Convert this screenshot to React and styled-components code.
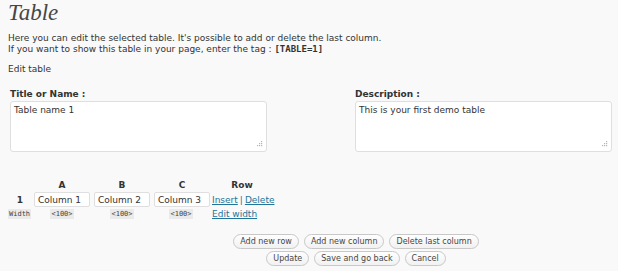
import React from 'react'
import styled, { createGlobalStyle } from 'styled-components'

const Global = createGlobalStyle`
  html, body {
    margin: 0;
    background: #f9f9f9;
    font-family: "DejaVu Sans", Verdana, sans-serif;
    font-size: 9px;
    color: #333;
  }
`

const Page = styled.div`
  width: 618px;
  height: 271px;
  padding: 0 6px 0 8px;
  box-sizing: border-box;
  overflow: hidden;
`

const Title = styled.h2`
  font-family: "Liberation Serif", "DejaVu Serif", serif;
  font-style: italic;
  font-weight: normal;
  font-size: 23px;
  color: #464646;
  margin: 0;
  padding-top: 1px;
  line-height: 24px;
`

const Intro = styled.p`
  margin: 8px 0 0;
  line-height: 11px;
`

const Tag = styled.code`
  font-family: "DejaVu Sans Mono", monospace;
  font-weight: bold;
  font-size: 9px;
`

const Sub = styled.p`
  margin: 9px 0 0;
  line-height: 11px;
`

const Fields = styled.div`
  display: flex;
  justify-content: space-between;
  padding: 0 0 0 2px;
  margin-top: 14px;
`

const Field = styled.div`
  display: flex;
  flex-direction: column;
  width: 257px;
`

const Label = styled.label`
  font-weight: bold;
  line-height: 11px;
  margin-bottom: 1px;
`

const AreaBox = styled.div`
  position: relative;
  height: 51px;
`

const Area = styled.textarea`
  width: 100%;
  height: 100%;
  box-sizing: border-box;
  border: 1px solid #dfdfdf;
  border-radius: 3px;
  background: #fff;
  font-family: "DejaVu Sans", Verdana, sans-serif;
  font-size: 9px;
  color: #333;
  padding: 3px 3px;
  margin: 0;
  resize: none;
  outline: none;
  display: block;
`

const Grip = styled.svg`
  position: absolute;
  right: 4px;
  bottom: 4px;
  width: 7px;
  height: 7px;
`

const Grid = styled.div`
  display: grid;
  grid-template-columns: 24px 58px 58px 56px auto;
  column-gap: 2px;
  margin-top: 27px;
  align-items: center;
`

const Head = styled.div`
  font-weight: bold;
  text-align: center;
  line-height: 12px;
  width: ${p => (p.$wide ? '60px' : '56px')};
`

const RowNum = styled.div`
  font-weight: bold;
  text-align: center;
`

const Cell = styled.input`
  width: 56px;
  height: 15px;
  box-sizing: border-box;
  border: 1px solid #dfdfdf;
  border-radius: 2px;
  background: #fff;
  font-family: "DejaVu Sans", Verdana, sans-serif;
  font-size: 9px;
  color: #333;
  padding: 0 3px;
  margin: 1px 0;
`

const Code = styled.code`
  font-family: "DejaVu Sans Mono", monospace;
  font-size: 7px;
  background: #eaeaea;
  padding: 1px 1px;
  color: #444;
  justify-self: ${p => (p.$left ? 'start' : 'center')};
  margin-right: ${p => (p.$left ? '0' : '2px')};
`

const Links = styled.div`
  line-height: 12px;
`

const A = styled.a`
  color: #21759b;
  text-decoration: underline;
  cursor: pointer;
`

const Sep = styled.span`
  color: #21759b;
  padding: 0 2px;
`

const Buttons = styled.div`
  padding-left: 92px;
  margin-top: 14px;
  display: flex;
  flex-direction: column;
  align-items: center;
  gap: 2px;
`

const BtnRow = styled.div`
  display: flex;
  gap: 5px;
`

const Btn = styled.button`
  font-family: "DejaVu Sans", Verdana, sans-serif;
  font-size: 8px;
  color: #464646;
  height: 15px;
  padding: 0 6px;
  border: 1px solid #c8c8c8;
  border-radius: 8px;
  background: linear-gradient(#fefefe, #f1f1f1);
  line-height: 13px;
  cursor: pointer;
`

function TextBox({ value }) {
  return (
    <AreaBox>
      <Area defaultValue={value} />
      <Grip viewBox="0 0 7 7">
        {[[5, 0], [3, 2], [5, 2], [1, 4], [3, 4], [5, 4]].map(([x, y]) => (
          <rect key={x + '-' + y} x={x} y={y} width="1.2" height="1.2" fill="#b5b5b5" />
        ))}
      </Grip>
    </AreaBox>
  )
}

export default function App() {
  return (
    <>
      <Global />
      <Page>
        <Title>Table</Title>
        <Intro>
          Here you can edit the selected table. It's possible to add or delete the last column.
          <br />
          If you want to show this table in your page, enter the tag : <Tag>[TABLE=1]</Tag>
        </Intro>
        <Sub>Edit table</Sub>
        <Fields>
          <Field>
            <Label>Title or Name :</Label>
            <TextBox value="Table name 1" />
          </Field>
          <Field>
            <Label>Description :</Label>
            <TextBox value="This is your first demo table" />
          </Field>
        </Fields>
        <Grid>
          <div />
          <Head>A</Head>
          <Head>B</Head>
          <Head>C</Head>
          <Head $wide>Row</Head>

          <RowNum>1</RowNum>
          <Cell defaultValue="Column 1" />
          <Cell defaultValue="Column 2" />
          <Cell defaultValue="Column 3" />
          <Links>
            <A>Insert</A>
            <Sep>|</Sep>
            <A>Delete</A>
          </Links>

          <Code $left>Width</Code>
          <Code>&lt;100&gt;</Code>
          <Code>&lt;100&gt;</Code>
          <Code>&lt;100&gt;</Code>
          <Links>
            <A>Edit width</A>
          </Links>
        </Grid>
        <Buttons>
          <BtnRow>
            <Btn>Add new row</Btn>
            <Btn>Add new column</Btn>
            <Btn>Delete last column</Btn>
          </BtnRow>
          <BtnRow>
            <Btn>Update</Btn>
            <Btn>Save and go back</Btn>
            <Btn>Cancel</Btn>
          </BtnRow>
        </Buttons>
      </Page>
    </>
  )
}
